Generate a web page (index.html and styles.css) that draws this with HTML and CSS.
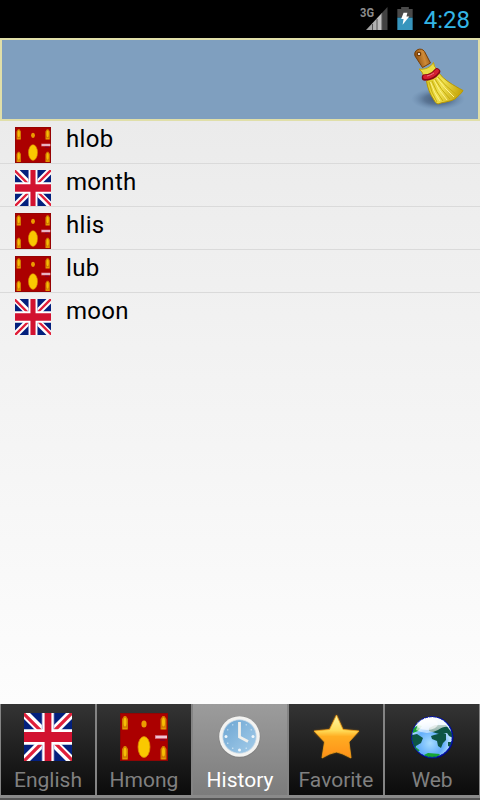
FILE: index.html
```html
<!DOCTYPE html>
<html lang="en">
<head>
    <meta charset="UTF-8">
    <meta name="viewport" content="width=device-width, initial-scale=1.0">
    <title>Hmong Dictionary - History</title>
    <link rel="stylesheet" href="styles.css">
</head>
<body>
    <!-- shared icons -->
    <svg class="defs" width="0" height="0">
        <defs>
            <linearGradient id="signal" x1="0" x2="1" y1="0" y2="0">
                <stop offset="0" stop-color="#999"/>
                <stop offset=".72" stop-color="#c4c4c4"/>
                <stop offset=".73" stop-color="#424242"/>
            </linearGradient>
            <linearGradient id="straw" x1="0" x2="1" y1="0" y2=".3">
                <stop offset="0" stop-color="#d8c51c"/>
                <stop offset=".5" stop-color="#f0e250"/>
                <stop offset="1" stop-color="#c9a90e"/>
            </linearGradient>
            <linearGradient id="wood" x1="0" x2="1" y1=".3" y2="0">
                <stop offset="0" stop-color="#8f4e0c"/>
                <stop offset=".5" stop-color="#cf8b38"/>
                <stop offset="1" stop-color="#8a4a0a"/>
            </linearGradient>
            <radialGradient id="shade">
                <stop offset="0" stop-color="#33455e" stop-opacity=".8"/>
                <stop offset=".5" stop-color="#3c5372" stop-opacity=".55"/>
                <stop offset="1" stop-color="#5d7ea3" stop-opacity="0"/>
            </radialGradient>
            <linearGradient id="face" x1="0" x2="1" y1="0" y2="1">
                <stop offset="0" stop-color="#6ca5d2"/>
                <stop offset="1" stop-color="#a5cdea"/>
            </linearGradient>
            <linearGradient id="gold" x1="0" x2="0" y1="0" y2="1">
                <stop offset="0" stop-color="#fff9a8"/>
                <stop offset=".36" stop-color="#ffdc58"/>
                <stop offset=".5" stop-color="#ffad22"/>
                <stop offset="1" stop-color="#ff9018"/>
            </linearGradient>
            <radialGradient id="sea" cx=".45" cy=".65" r=".55">
                <stop offset="0" stop-color="#a6dcff"/>
                <stop offset=".6" stop-color="#62adfa"/>
                <stop offset="1" stop-color="#cdebff"/>
            </radialGradient>
            <linearGradient id="shine" x1="0" x2="0" y1="0" y2="1">
                <stop offset="0" stop-color="#fff" stop-opacity=".95"/>
                <stop offset="1" stop-color="#fff" stop-opacity=".5"/>
            </linearGradient>
            <filter id="soft"><feGaussianBlur stdDeviation="1"/></filter>
            <clipPath id="globe"><circle cx="24" cy="24" r="20.5"/></clipPath>
        </defs>
        <symbol id="uk" viewBox="0 0 48 48">
            <rect width="48" height="48" fill="#03207d"/>
            <path d="M0 0L48 48M48 0L0 48" stroke="#fff" stroke-width="8.5"/>
            <path d="M-1 0L22 23M49 -1L25 23M-1 49L23 25M26 25L49 48" stroke="#e0203a" stroke-width="3.2"/>
            <path d="M24 0V48" stroke="#a9a9d4" stroke-width="12.5"/>
            <path d="M24 0V48" stroke="#fff" stroke-width="10.8"/>
            <path d="M0 24H48" stroke="#fff" stroke-width="15.500"/>
            <path d="M24 0V48" stroke="#d21230" stroke-width="6.800"/>
            <path d="M0 24H48" stroke="#d21230" stroke-width="10"/>
        </symbol>
        <symbol id="hmong" viewBox="0 0 48 48">
            <rect width="48" height="48" fill="#8f0505"/>
            <rect x="1" y="1" width="46" height="46" fill="#ab0000"/>
            <g fill="#d17a00">
                <path d="M2 16.500V6l2-3h2l2 3v10.500zM40.500 16.500V6l2-3h2l2 3v10.500zM2 46.500V36l2-3h2l2 3v10.500zM40.500 46.500V36l2-3h2l2 3v10.500z"/>
            </g>
            <g fill="#f6bd05">
                <ellipse cx="5" cy="9" rx="1.500" ry="4.500"/>
                <ellipse cx="43.500" cy="9" rx="1.500" ry="4.500"/>
                <ellipse cx="5" cy="39" rx="1.500" ry="4.500"/>
                <ellipse cx="43.500" cy="39" rx="1.500" ry="4.500"/>
                <path d="M3 15.500h4M41.500 15.500h4M3 45.500h4M41.500 45.500h4" stroke="#e89b00" stroke-width="1.500"/>
            </g>
            <ellipse cx="24" cy="11" rx="2.600" ry="3.500" fill="#ec9c00"/>
            <ellipse cx="24" cy="34" rx="6" ry="10.500" fill="#fac800" stroke="#d98300" stroke-width=".8"/>
            <path d="M35 24H47" stroke="#dd8098" stroke-width="3.500"/>
            <path d="M36 24H47" stroke="#f3dbe4" stroke-width="1.500"/>
            <path d="M40 27h5" stroke="#700040" stroke-width="1"/>
        </symbol>
    </svg>

    <div class="status-bar">
        <svg width="28" height="26" viewBox="0 0 28 26">
            <text class="network" x="0" y="11" textLength="14" lengthAdjust="spacingAndGlyphs">3G</text>
            <path d="M6 24L27.500 1V24z" fill="url(#signal)"/>
            <path d="M12.500 18v6M17 13v11M22 7v17" stroke="#555" stroke-width="1"/>
        </svg>
        <svg class="battery" width="16" height="23" viewBox="0 0 16 24">
            <path d="M4 0h8v2h4v9H0V2h4z" fill="#4a4a4a"/>
            <path d="M0 11h16v13H0z" fill="#3795bd"/>
            <path d="M6.500 6h4l-1 4h3L5.500 18.500l1-6H4z" fill="#fff"/>
        </svg>
        <span class="clock">4:28</span>
    </div>

    <div class="header">
        <svg class="broom" width="80" height="78" viewBox="0 4 80 78">
            <ellipse cx="38" cy="63" rx="27" ry="11" fill="url(#shade)"/>
            <path d="M15 20c-2-6 6-9.500 9.500-4.500l6 11.500-8 4.500z" fill="url(#wood)" stroke="#784008" stroke-width="1"/>
            <circle cx="19" cy="18" r="2.300" fill="#6f3b08"/>
            <circle cx="19" cy="18" r="1.100" fill="#fff"/>
            <path d="M19 33c6 1 11.500-1.500 14.500-6.500l1 4 2.500 2.500-13 8-2-5z" fill="#eadc45" stroke="#c3a508" stroke-width="1"/>
            <path d="M26.500 45L39 37C44 44 53 49 63 54.500C61 58 58 60 55 63C50 66 42 66 38 68C36 67 35 66 34 64C30 58 27.500 52 26.500 45z" fill="url(#straw)" stroke="#b99700" stroke-width="1"/>
            <path d="M29 46Q31 56 37 66M32 45Q36 56 43 65M35 43Q41 54 50 63M38 41Q45 50 57 59" stroke="#c8ad10" stroke-width="1" fill="none"/>
            <path d="M30.500 46Q34 57 40 65M34 44Q39 55 47 64M37 42Q44 52 54 61" stroke="#fff08a" stroke-width="1" fill="none"/>
            <path d="M25 41.500c5 0 9-2 12-6" stroke="#870613" stroke-width="6.500" stroke-linecap="round" fill="none"/>
            <path d="M25 41c5 0 9-2 12-6" stroke="#d51e31" stroke-width="4" stroke-linecap="round" fill="none"/>
            <path d="M27 40c3-.5 5-2 7-3" stroke="#ee7480" stroke-width="1" fill="none"/>
        </svg>
    </div>

    <ul class="history">
        <li><svg class="flag"><use href="#hmong"/></svg><span>hlob</span></li>
        <li><svg class="flag"><use href="#uk"/></svg><span>month</span></li>
        <li><svg class="flag"><use href="#hmong"/></svg><span>hlis</span></li>
        <li><svg class="flag"><use href="#hmong"/></svg><span>lub</span></li>
        <li><svg class="flag"><use href="#uk"/></svg><span>moon</span></li>
    </ul>

    <div class="tabs">
        <div class="tab">
            <svg class="icon"><use href="#uk"/></svg>
            <span>English</span>
        </div>
        <div class="tab">
            <svg class="icon"><use href="#hmong"/></svg>
            <span>Hmong</span>
        </div>
        <div class="tab active">
            <svg class="icon" viewBox="0 0 48 48">
                <circle cx="23.500" cy="24" r="21" fill="#777" opacity=".4"/>
                <circle cx="23.500" cy="23.500" r="20.300" fill="#f3f3f1"/>
                <circle cx="23.500" cy="23.500" r="16.800" fill="url(#face)" stroke="#d0dde7" stroke-width=".8"/>
                <g fill="#eef6fc">
                    <circle cx="10" cy="23.500" r="1.500"/>
                    <circle cx="37" cy="23.500" r="1.500"/>
                    <circle cx="23.500" cy="37" r="1.500"/>
                    <circle cx="11.800" cy="16.800" r=".6"/>
                    <circle cx="16.800" cy="11.800" r=".6"/>
                    <circle cx="30.200" cy="11.800" r=".6"/>
                    <circle cx="35.200" cy="16.800" r=".6"/>
                    <circle cx="11.800" cy="30.200" r=".6"/>
                    <circle cx="16.800" cy="35.200" r=".6"/>
                    <circle cx="30.200" cy="35.200" r=".6"/>
                </g>
                <path d="M23.500 9V24L32 28.500" stroke="#f1f0ec" stroke-width="2.800" fill="none"/>
            </svg>
            <span>History</span>
        </div>
        <div class="tab">
            <svg class="icon" viewBox="0 0 48 48">
                <path d="M24.500 1.500L31 16.500L47 18L36 29L39 45Q30 40 24.500 39Q18 40 10 45L13 29L1.500 18L17.500 16.500z" fill="#ff9c00" opacity=".6" filter="url(#soft)"/>
                <path d="M24.500 2L31 16.500L47 18L37 29L39 45Q30 40 24.500 39Q18 40 10 45L12.500 29L2 18L17.500 16.500z" fill="url(#gold)" stroke="#f4a018" stroke-width=".8" stroke-linejoin="round"/>
            </svg>
            <span>Favorite</span>
        </div>
        <div class="tab">
            <svg class="icon" viewBox="0 0 48 48">
                <circle cx="24.500" cy="24.500" r="21" fill="#000b86"/>
                <circle cx="24" cy="24" r="20" fill="url(#sea)"/>
                <g clip-path="url(#globe)">
                    <path d="M4 22l5-1 6 4-2 5-5 3-1 5-4-6zM26 22l8-2 4 1 0 6-3 3-2 5-3-2-1-5-5-2-1-3zM21 15l6-3 11 0 6 8 1 5-4-2-2-3-8 1-10-3zM40 29l4 0-1 5-3-1z" fill="#0d5544"/>
                    <path d="M5 16l5-4 4 1-4 5-5 2zM16 42l4-2 12 1-4 5h-8z" fill="#15a434"/>
                    <path d="M6 34l5 4" stroke="#15a434" stroke-width="2"/>
                    <path d="M8 17Q12 3 25 4Q36 5 40 14Q36 13 30 17Q19 23 8 17z" fill="url(#shine)"/>
                    <ellipse cx="19" cy="11" rx="11" ry="6" fill="#fff" opacity=".65"/>
                </g>
                <circle cx="24" cy="24" r="20.300" fill="none" stroke="#0515b8" stroke-width="1" stroke-dasharray="3 1"/>
            </svg>
            <span>Web</span>
        </div>
    </div>
    <div class="strip"></div>
</body>
</html>
```

FILE: styles.css
```css
* {
    box-sizing: border-box;
}

body {
    margin: 0;
    width: 480px;
    height: 800px;
    display: flex;
    flex-direction: column;
    overflow: hidden;
    font-family: Roboto, "Liberation Sans", sans-serif;
    background: #000;
}

.defs {
    position: absolute;
}

.status-bar {
    height: 38px;
    display: flex;
    align-items: flex-start;
    justify-content: flex-end;
    padding: 6px 10px 0 0;
    background: #000;
}

.network {
    font-size: 12px;
    font-weight: bold;
    fill: #8c8c8c;
}

.battery {
    margin: 1px 11px 0 9px;
}

.clock {
    font-size: 24px;
    line-height: 28px;
    color: #33b5e5;
}

.header {
    height: 83px;
    border: 2px solid #e0dfa9;
    background: #7f9fbf;
    display: flex;
    justify-content: flex-end;
}

.broom {
    margin-right: -2px;
}

.history {
    flex: 1;
    margin: 0;
    padding: 0;
    list-style: none;
    background: linear-gradient(#ebebeb, #fdfdfd);
}

.history li {
    height: 43px;
    display: flex;
    padding-left: 15px;
    border-bottom: 1px solid #dadada;
    font-size: 24px;
    line-height: 28px;
    letter-spacing: 0.3px;
    color: #000;
}

.history li:last-child {
    border-bottom: none;
}

.history span {
    margin-top: 4px;
}

.flag {
    width: 36px;
    height: 36px;
    margin: 6px 15px 0 0;
}

.tabs {
    height: 91px;
    display: flex;
}

.tab {
    flex: 1;
    display: flex;
    flex-direction: column;
    align-items: center;
    padding-top: 9px;
    border-left: 1px solid #848484;
    border-right: 1px solid #848484;
    background: linear-gradient(#343434, #0b0b0b);
    font-size: 21px;
    line-height: 24px;
    color: #808080;
}

.tab.active {
    background: linear-gradient(#9c9c9c, #7c7c7c);
    color: #fff;
}

.icon {
    width: 48px;
    height: 48px;
    margin-bottom: 7px;
}

.strip {
    height: 5px;
    background: linear-gradient(#8a8a8a 0 3px, #555 3px);
}
```
